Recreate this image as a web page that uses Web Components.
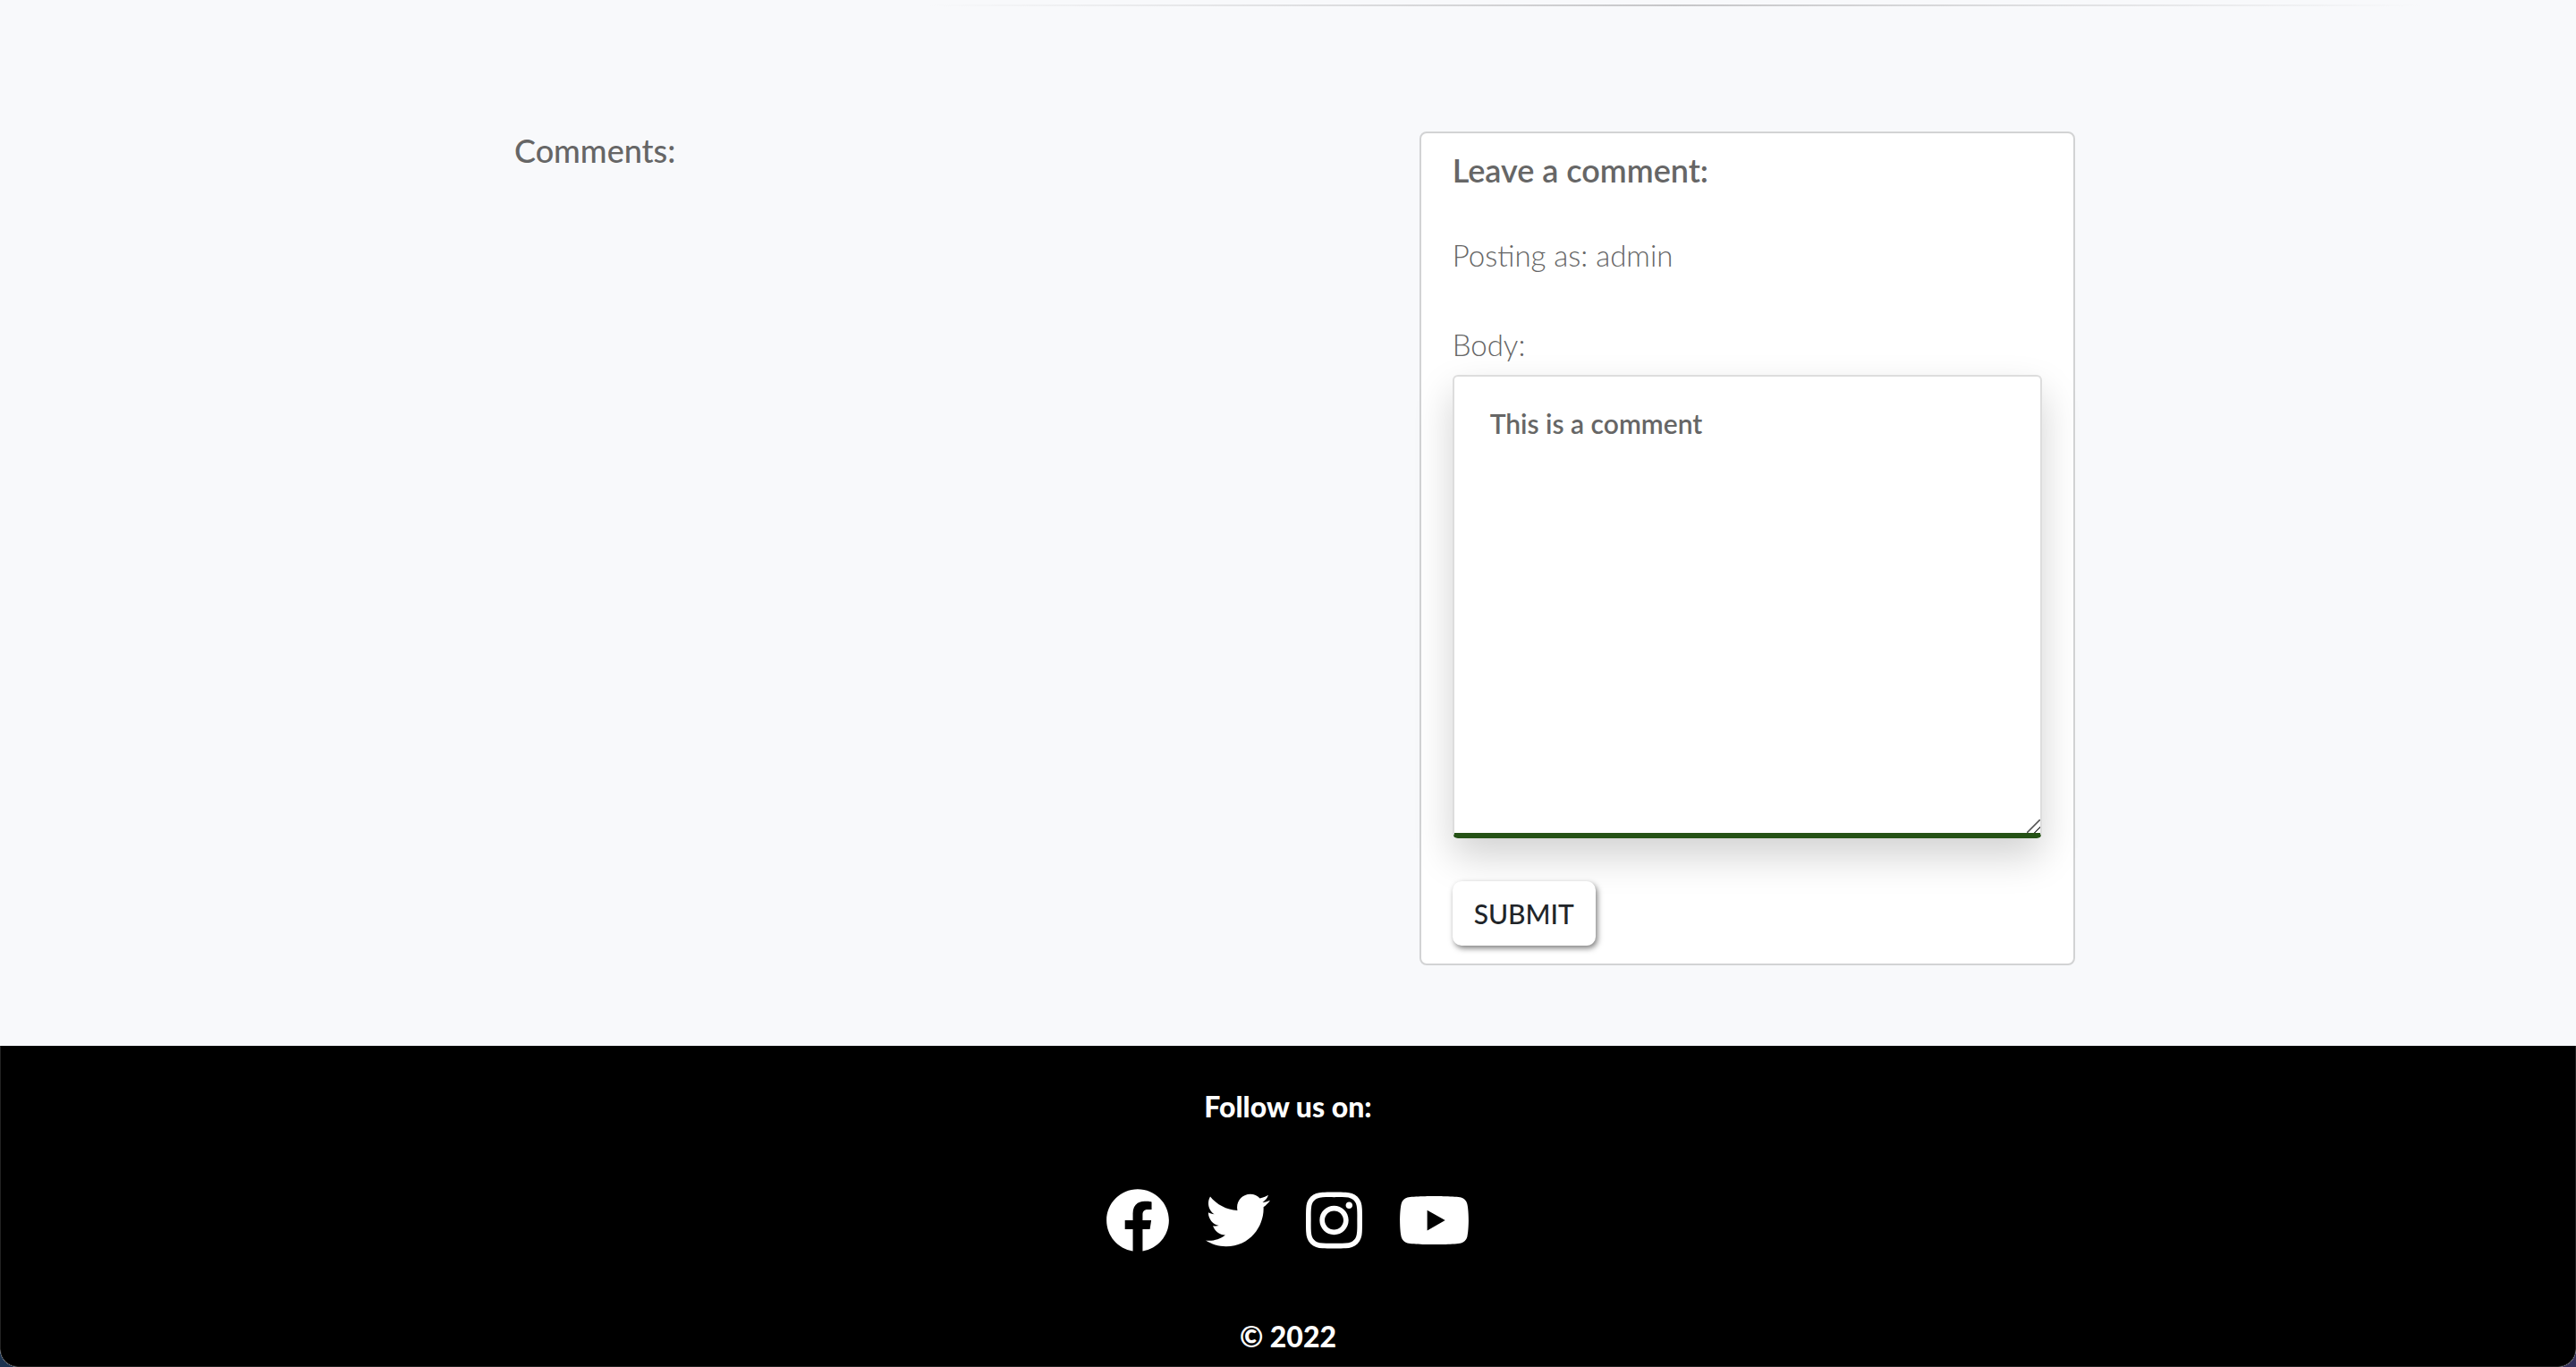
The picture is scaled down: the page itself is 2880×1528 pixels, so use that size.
<!DOCTYPE html>
<html lang="en">
<head>
<meta charset="utf-8">
<meta name="viewport" content="width=device-width, initial-scale=1">
<title>Comments</title>
<style>
html, body { height: 100%; }
body { margin: 0; background: linear-gradient(90deg, #1c3350, #35325a); font-family: Lato, "Open Sans", sans-serif; color: #666; }
</style>
</head>
<body>
<blog-page>
  <soft-divider></soft-divider>
  <comment-section>
    <comment-list>Comments:</comment-list>
    <comment-form author="admin">Leave a comment:</comment-form>
  </comment-section>
  <site-footer slot="footer">
    <social-link name="facebook" href="#facebook"></social-link>
    <social-link name="twitter" href="#twitter"></social-link>
    <social-link name="instagram" href="#instagram"></social-link>
    <social-link name="youtube" href="#youtube"></social-link>
  </site-footer>
</blog-page>
<script>
class BaseElement extends HTMLElement {
  render(html) { this.attachShadow({ mode: "open" }).innerHTML = html; }
}

customElements.define("blog-page", class extends BaseElement {
  connectedCallback() {
    this.render(`<style>
      :host { display: flex; flex-direction: column; min-height: 100vh; box-sizing: border-box; background: #f8f9fb; border-radius: 0 0 20px 20px; overflow: hidden; }
      main { display: block; padding: 5px 0 90px; }
      ::slotted([slot=footer]) { flex: 1; }
    </style><main><slot></slot></main><slot name="footer"></slot>`);
  }
});

customElements.define("soft-divider", class extends BaseElement {
  connectedCallback() {
    this.render(`<style>
      :host { display: block; padding: 0 6% 0 36%; }
      hr { height: 2px; margin: 0; border: 0; background: linear-gradient(90deg, transparent, #c6c6c8, transparent); }
    </style><hr>`);
  }
});

customElements.define("comment-section", class extends BaseElement {
  connectedCallback() {
    this.render(`<style>
      :host { display: grid; grid-template-columns: 7fr 5fr; max-width: 1760px; margin: 140px auto 0; }
    </style><slot></slot>`);
  }
});

customElements.define("comment-list", class extends BaseElement {
  connectedCallback() {
    this.render(`<style>
      :host { display: block; padding: 0 15px; }
      h2 { margin: 0; font-size: 36px; line-height: 42px; font-weight: 500; }
    </style><h2><slot></slot></h2>`);
  }
});

customElements.define("comment-form", class extends BaseElement {
  connectedCallback() {
    this.render(`<style>
      :host { display: block; box-sizing: border-box; background: #fff; border: 2px solid #d2d3d4; border-radius: 8px; padding: 20px 35px; }
      h2 { margin: 0; font-size: 36px; line-height: 42px; font-weight: 600; }
      p { margin: 52px 0 0; }
      form { display: flex; flex-direction: column; align-items: flex-start; margin: 56px 0 0; }
      p, label { font-size: 33px; line-height: 44px; font-weight: 300; }
      textarea { display: block; box-sizing: border-box; width: 100%; height: 518px; margin: 12px 0 48px; padding: 32px 40px; resize: vertical;
        font: 600 30px/40px Lato, "Open Sans", sans-serif; color: #666; background: #fff;
        border: 2px solid #ddd; border-bottom: 6px solid #255216; border-radius: 6px; outline: 0; box-shadow: 0 20px 44px rgba(0,0,0,.18); }
      textarea::-webkit-resizer { background: linear-gradient(135deg, transparent 46%, #555 47%, #555 53%, transparent 54%, transparent 75%, #555 76%, #555 82%, transparent 83%); }
      button { position: relative; height: 72px; padding: 0 24px; border: 0; border-radius: 10px; background: #fff; color: #212529;
        font: 500 30px/40px Lato, "Open Sans", sans-serif; box-shadow: 2px 3px 6px rgba(0,0,0,.5); }
    </style>
    <h2><slot></slot></h2>
    <p>Posting as: ${this.getAttribute("author")}</p>
    <form>
      <label for="body">Body:</label>
      <textarea id="body" name="body" spellcheck="false">This is a comment</textarea>
      <button type="button">SUBMIT</button>
    </form>`);
  }
});

customElements.define("site-footer", class extends BaseElement {
  connectedCallback() {
    this.render(`<style>
      :host { display: flex; flex-direction: column; align-items: center; box-sizing: border-box; background: #000; color: #fff; padding: 48px 0 0; border: 1px solid #222; border-top: 0; border-radius: 0 0 20px 20px; }
      p { margin: 0; font-size: 32px; line-height: 40px; font-weight: 900; }
      nav { display: flex; gap: 40px; margin: 71px 0 74px; }
    </style>
    <p>Follow us on:</p><nav><slot></slot></nav><p>© 2022</p>`);
  }
});

const glyphs = {
  facebook: [512, "M504 256C504 119 393 8 256 8S8 119 8 256c0 123.78 90.69 226.38 209.25 245V327.69h-63V256h63v-54.64c0-62.15 37-96.48 93.67-96.48 27.14 0 55.52 4.84 55.52 4.84v61h-31.28c-30.8 0-40.41 19.12-40.41 38.73V256h68.78l-11 71.69h-57.78V501C413.31 482.38 504 379.78 504 256z"],
  twitter: [512, "M459.37 151.716c.325 4.548.325 9.097.325 13.645 0 138.72-105.583 298.558-298.558 298.558-59.452 0-114.68-17.219-161.137-47.106 8.447.974 16.568 1.299 25.34 1.299 49.055 0 94.213-16.568 130.274-44.832-46.132-.975-84.792-31.188-98.112-72.772 6.498.974 12.995 1.624 19.818 1.624 9.421 0 18.843-1.3 27.614-3.573-48.081-9.747-84.143-51.98-84.143-102.985v-1.299c13.969 7.797 30.214 12.67 47.431 13.319-28.264-18.843-46.781-51.005-46.781-87.391 0-19.492 5.197-37.36 14.294-52.954 51.655 63.675 129.3 105.258 216.365 109.807-1.624-7.797-2.599-15.918-2.599-24.04 0-57.828 46.782-104.934 104.934-104.934 30.213 0 57.502 12.67 76.67 33.137 23.715-4.548 46.456-13.32 66.599-25.34-7.798 24.366-24.366 44.833-46.132 57.827 21.117-2.273 41.584-8.122 60.426-16.243-14.292 20.791-32.161 39.308-52.628 54.253z"],
  instagram: [448, "M224.1 141c-63.6 0-114.9 51.3-114.9 114.9s51.3 114.9 114.9 114.9S339 319.5 339 255.9 287.7 141 224.1 141zm0 189.6c-41.1 0-74.7-33.5-74.7-74.7s33.5-74.7 74.7-74.7 74.7 33.5 74.7 74.7-33.6 74.7-74.7 74.7zm146.4-194.3c0 14.9-12 26.8-26.8 26.8-14.9 0-26.8-12-26.8-26.8s12-26.8 26.8-26.8 26.8 12 26.8 26.8zm76.1 27.2c-1.7-35.9-9.9-67.7-36.2-93.9-26.2-26.2-58-34.4-93.9-36.2-37-2.1-147.9-2.1-184.9 0-35.8 1.7-67.6 9.9-93.9 36.1s-34.4 58-36.2 93.9c-2.1 37-2.1 147.9 0 184.9 1.7 35.9 9.9 67.7 36.2 93.9s58 34.4 93.9 36.2c37 2.1 147.9 2.1 184.9 0 35.9-1.7 67.7-9.9 93.9-36.2 26.2-26.2 34.4-58 36.2-93.9 2.1-37 2.1-147.8 0-184.8zM398.8 388c-7.8 19.6-22.9 34.7-42.6 42.6-29.5 11.7-99.5 9-132.1 9s-102.7 2.6-132.1-9c-19.6-7.8-34.7-22.9-42.6-42.6-11.7-29.5-9-99.5-9-132.1s-2.6-102.7 9-132.1c7.8-19.6 22.9-34.7 42.6-42.6 29.5-11.7 99.5-9 132.1-9s102.7-2.6 132.1 9c19.6 7.8 34.7 22.9 42.6 42.6 11.7 29.5 9 99.5 9 132.1s2.7 102.7-9 132.1z"],
  youtube: [576, "M549.655 124.083c-6.281-23.65-24.787-42.276-48.284-48.597C458.781 64 288 64 288 64S117.22 64 74.629 75.486c-23.497 6.322-42.003 24.947-48.284 48.597-11.412 42.867-11.412 132.305-11.412 132.305s0 89.438 11.412 132.305c6.281 23.65 24.787 41.5 48.284 47.821C117.22 448 288 448 288 448s170.78 0 213.371-11.486c23.497-6.321 42.003-24.171 48.284-47.821 11.412-42.867 11.412-132.305 11.412-132.305s0-89.438-11.412-132.305zm-317.51 213.508V175.185l142.739 81.205-142.739 81.201z"]
};

customElements.define("social-link", class extends BaseElement {
  connectedCallback() {
    const name = this.getAttribute("name");
    const [width, path] = glyphs[name];
    this.render(`<style>
      :host { display: block; }
      a { display: block; color: inherit; }
      svg { display: block; height: 72px; fill: currentColor; }
    </style><a href="${this.getAttribute("href")}" aria-label="${name}"><svg viewBox="0 0 ${width} 512" aria-hidden="true"><path d="${path}"/></svg></a>`);
  }
});
</script>
</body>
</html>
